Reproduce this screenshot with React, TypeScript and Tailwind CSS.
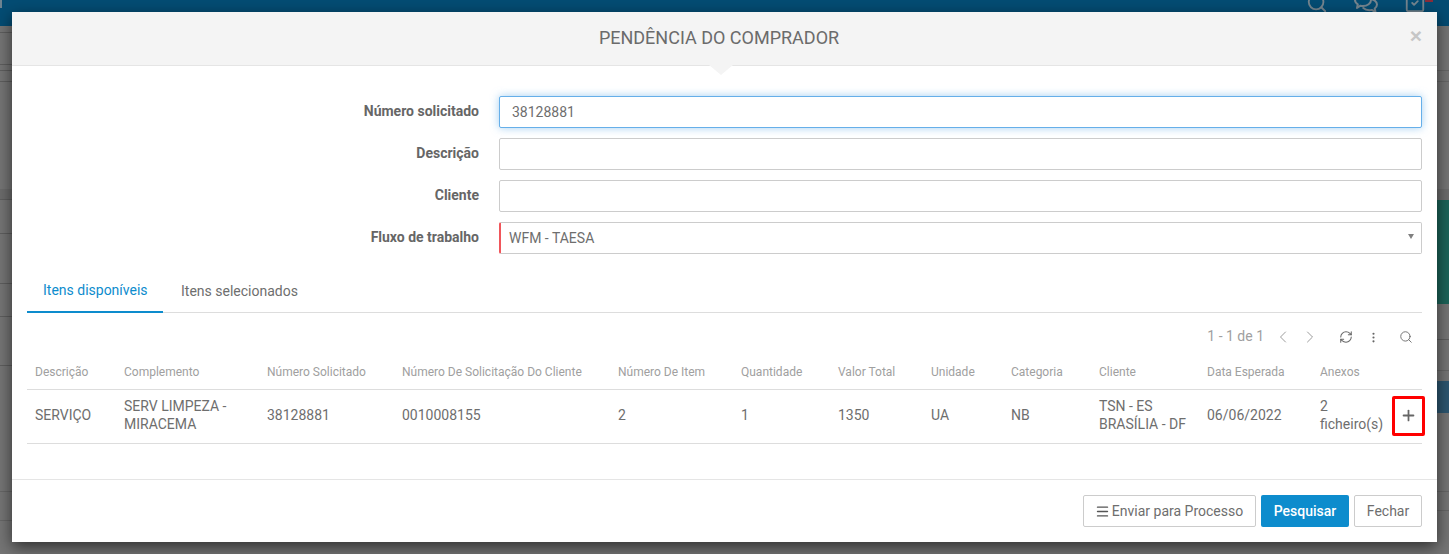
import { ChevronLeft, ChevronRight, RefreshCw, EllipsisVertical, Search, SquareCheck, Menu, Plus } from "lucide-react";

const leftRows = [
  "h-[7px] border-b border-[#5e5e5e]",
  "h-[32px] border-b border-[#5e5e5e]",
  "h-[6px] border-b border-[#5e5e5e]",
  "h-[11px] border-b border-[#5e5e5e]",
  "h-[107px]",
  "h-[11px] bg-[#6c6c6c] border-b border-[#5e5e5e]",
  "h-[34px] border-b border-[#5e5e5e]",
  "h-[50px] border-b border-[#5e5e5e]",
  "h-[33px] border-b border-[#5e5e5e]",
  "h-[49px] border-b border-[#5e5e5e]",
  "h-[126px] border-b border-[#666666]",
  "h-[29px] border-b border-[#666666]",
];
const rightRows = [
  "h-[45px] border-b border-[#666666]",
  "h-[11px] border-b border-[#666666]",
  "h-[107px]",
  "h-[11px] bg-[#6c6c6c]",
  "h-[104px] bg-[#1c6459]",
  "h-[36px] border-b border-[#5e5e5e]",
  "h-[31px] border-b border-[#666666]",
  "h-[10px]",
  "h-[32px] bg-[#2c5670]",
  "h-[79px] border-b border-[#666666]",
  "h-[19px] border-b border-[#666666]",
];

const cols = [
  { label: "Descrição", w: "w-[89px]", value: "SERVIÇO" },
  { label: "Complemento", w: "w-[143px]", value: "SERV LIMPEZA - MIRACEMA" },
  { label: "Número Solicitado", w: "w-[135px]", value: "38128881" },
  { label: "Número De Solicitação Do Cliente", w: "w-[216px]", value: "0010008155" },
  { label: "Número De Item", w: "w-[123px]", value: "2" },
  { label: "Quantidade", w: "w-[97px]", value: "1" },
  { label: "Valor Total", w: "w-[93px]", value: "1350" },
  { label: "Unidade", w: "w-[80px]", value: "UA" },
  { label: "Categoria", w: "w-[88px]", value: "NB" },
  { label: "Cliente", w: "w-[108px]", value: "TSN - ES BRASÍLIA - DF" },
  { label: "Data Esperada", w: "w-[113px]", value: "06/06/2022" },
  { label: "Anexos", w: "w-[79px]", value: "2 ficheiro(s)" },
];

function Field({ label, children }: { label: string; children: React.ReactNode }) {
  return (
    <div className="flex items-center h-[32px] mb-[10px]">
      <label className="w-[452px] text-right text-[14px] font-bold text-[#666666] -mt-[2px]">{label}</label>
      <div className="ml-[20px] flex-1">{children}</div>
    </div>
  );
}

export default function App() {
  return (
    <div className="relative h-screen w-full overflow-hidden bg-[#757575] font-['Roboto',sans-serif]">
      <div className="relative h-[26px] bg-[#044c73] overflow-hidden">
        <div className="absolute left-0 top-0 h-[8px] w-[2px] bg-[#6d8391]" />
        <div className="flex justify-end items-start gap-[26px] pr-[23px] -mt-[8px] text-[#75858f]">
          <Search size={22} strokeWidth={2} />
          <svg width="24" height="22" viewBox="0 0 24 22" fill="none" stroke="currentColor" strokeWidth="2" strokeLinejoin="round" strokeLinecap="round">
            <path d="M9 2c4.400 0 8 2.700 8 6s-3.600 6-8 6c-.9 0-1.700-.1-2.500-.3L3 16l.8-3.700C2 11.200 1 9.700 1 8c0-3.300 3.600-6 8-6z" />
            <path d="M18.500 7.500C21.100 8.500 23 10.400 23 12.600c0 1.500-.9 2.900-2.300 3.900l.8 3.500-3.800-2.100c-.8.2-1.600.3-2.400.3-2.500 0-4.700-.9-6-2.200" />
          </svg>
          <SquareCheck size={22} strokeWidth={2} />
        </div>
        <div className="absolute right-[16px] top-0 h-[2px] w-[8px] bg-[#8a2d3a]" />
      </div>
      <div className="flex justify-between h-[528px]">
        <div className="w-[12px] flex flex-col">
          {leftRows.map((c, i) => (
            <div key={i} className={c} />
          ))}
        </div>
        <div className="w-[12px] flex flex-col">
          {rightRows.map((c, i) => (
            <div key={i} className={c} />
          ))}
        </div>
      </div>

      <div className="absolute left-[12px] top-[12px] w-[1425px] h-[530px] bg-white shadow-[0_5px_15px_rgba(0,0,0,0.6)] flex flex-col">
        <div className="relative h-[54px] shrink-0 bg-[#f4f4f4] border-b border-[#e5e5e5] flex items-center justify-center">
          <h2 className="text-[18px] text-[#6b6b6b] leading-[20px] -mt-[2px] mr-[11px]">PENDÊNCIA DO COMPRADOR</h2>
          <span className="absolute right-[15px] top-[13px] font-['Liberation_Sans',sans-serif] text-[21px] font-bold leading-[21px] text-[#c6c6c6]">×</span>
          <div className="absolute left-[697px] top-[53px] w-0 h-0 border-x-[12px] border-x-transparent border-t-[10px] border-t-[#f4f4f4]" />
        </div>

        <div className="px-[15px] pt-[30px] flex-1">
          <Field label="Número solicitado">
            <input
              readOnly
              value="38128881"
              className="w-full h-[32px] px-[12px] text-[14px] text-[#6e6e6e] bg-white border border-[#66afe9] rounded-[2px] outline-none shadow-[0_0_8px_rgba(102,175,233,0.6)] font-['Roboto',sans-serif]"
            />
          </Field>
          <Field label="Descrição">
            <input readOnly className="w-full h-[32px] px-[12px] bg-white border border-[#cccccc] rounded-[2px] outline-none" />
          </Field>
          <Field label="Cliente">
            <input readOnly className="w-full h-[32px] px-[12px] bg-white border border-[#cccccc] rounded-[2px] outline-none" />
          </Field>
          <Field label="Fluxo de trabalho">
            <div className="relative h-[32px] flex items-center bg-white border border-[#cccccc] border-l-2 border-l-[#f0565b] rounded-[2px] pl-[8px] text-[14px] text-[#6e6e6e]">
              WFM - TAESA
              <span className="absolute right-[7px] top-[11px] w-0 h-0 border-x-[3px] border-x-transparent border-t-[5px] border-t-[#808080]" />
            </div>
          </Field>

          <div className="mt-[14px] flex border-b border-[#dddddd] h-[45px]">
            <div className="w-[136px] h-[45px] border-b-2 border-[#0d8ccd] text-[14px] text-[#0d8ccd] pt-[12px] pl-[16px] leading-[20px]">
              Itens disponíveis
            </div>
            <div className="ml-[18px] text-[14px] text-[#6e6e6e] pt-[13px] leading-[20px]">Itens selecionados</div>
          </div>

          <div className="h-[42px] pt-[6px] flex items-center justify-end text-[#888888] pr-[9px]">
            <span className="text-[14px] text-[#a0a0a0] mr-[10px] -mt-px">1 - 1 de 1</span>
            <ChevronLeft size={20} strokeWidth={1} className="-translate-x-px" />
            <ChevronRight size={20} strokeWidth={1} className="ml-[7px] -translate-x-px" />
            <RefreshCw size={14} strokeWidth={1.75} className="ml-[18px] text-[#666666]" />
            <EllipsisVertical size={13} strokeWidth={2} className="ml-[14px] text-[#666666]" />
            <Search size={14} strokeWidth={1.5} className="ml-[19px] text-[#666666]" />
          </div>

          <table className="table-fixed w-[1395px] border-collapse">
            <thead>
              <tr className="border-b border-[#dddddd] h-[34px]">
                {cols.map((c) => (
                  <th key={c.label} className={`${c.w} px-[8px] text-left text-[12px] font-normal text-[#a0a0a0] whitespace-nowrap`}>
                    {c.label}
                  </th>
                ))}
                <th className="w-[31px]" />
              </tr>
            </thead>
            <tbody>
              <tr className="border-b border-[#dddddd] h-[54px]">
                {cols.map((c) => (
                  <td key={c.label} className="px-[8px] pt-[7px] pb-[9px] text-[14px] leading-[18px] text-[#6e6e6e]">
                    {c.value}
                  </td>
                ))}
                <td className="p-0">
                  <div className="ml-px -mt-px w-[33px] h-[40px] border-[3px] border-[#ff0000] rounded-[2px] flex items-center justify-center text-[#666666]">
                    <Plus size={17} strokeWidth={2.5} />
                  </div>
                </td>
              </tr>
            </tbody>
          </table>
        </div>

        <div className="shrink-0 border-t border-[#e5e5e5] h-[63px] pt-[15px] pr-[15px] flex justify-end gap-[5px]">
          <button className="h-[32px] w-[173px] flex items-center justify-center bg-white border border-[#cccccc] rounded-[2px] text-[14px] text-[#6e6e6e] pr-[1px]">
            <Menu size={15} strokeWidth={2.25} className="mr-[2px] text-[#555555]" />
            Enviar para Processo
          </button>
          <button className="h-[32px] w-[88px] bg-[#0d8ccd] rounded-[2px] text-[14px] font-medium text-white">Pesquisar</button>
          <button className="h-[32px] w-[68px] bg-white border border-[#cccccc] rounded-[2px] text-[14px] text-[#6e6e6e]">Fechar</button>
        </div>
      </div>
    </div>
  );
}
